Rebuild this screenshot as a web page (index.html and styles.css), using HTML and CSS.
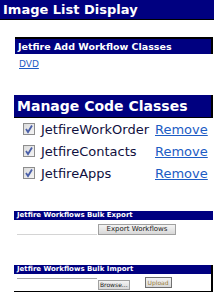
FILE: index.html
```html
<!DOCTYPE html>
<html lang="en">
<head>
<meta charset="utf-8" />
<title>Image List Display</title>
<link rel="stylesheet" href="styles.css">
</head>
<body>

<div class="title">Image List Display</div>

<div class="panel add">
	<div class="head">Jetfire Add Workflow Classes</div>
	<a class="dvd" href="#">DVD</a>
</div>

<div class="panel manage">
	<div class="head">Manage Code Classes</div>
	<div class="row">
		<span class="check"><svg viewBox="0 0 10 10"><path d="M2 5 L4 8 L8 1.5" /></svg></span>
		<span class="name">JetfireWorkOrder</span>
		<a href="#">Remove</a>
	</div>
	<div class="row">
		<span class="check"><svg viewBox="0 0 10 10"><path d="M2 5 L4 8 L8 1.5" /></svg></span>
		<span class="name">JetfireContacts</span>
		<a href="#">Remove</a>
	</div>
	<div class="row">
		<span class="check"><svg viewBox="0 0 10 10"><path d="M2 5 L4 8 L8 1.5" /></svg></span>
		<span class="name">JetfireApps</span>
		<a href="#">Remove</a>
	</div>
</div>

<div class="panel export">
	<div class="head">Jetfire Workflows Bulk Export</div>
	<div class="line">
		<span class="field"></span>
		<span class="btn wide">Export Workflows</span>
	</div>
</div>

<div class="panel import">
	<div class="head">Jetfire Workflows Bulk Import</div>
	<div class="line">
		<span class="field"></span>
		<span class="btn browse">Browse...</span>
		<span class="btn up">Upload</span>
	</div>
</div>

</body>
</html>
```

FILE: styles.css
```css
body {
	margin: 0;
	font-family: "DejaVu Sans", Verdana, sans-serif;
	background: #fff;
}

.title {
	height: 19px;
	background: #000080;
	border-bottom: 1px solid #000;
	color: #fff;
	font: bold 13px/19px "DejaVu Sans", sans-serif;
	padding-left: 3px;
}

/* --------------------------------- */

.panel {
	margin-left: 14px;
	margin-right: 1px;
}
.head {
	background: #000080;
	color: #fff;
	font-weight: bold;
	padding-left: 3px;
}

.add {
	margin-top: 17px;
}
.add .head {
	border-top: 2px solid #000;
	border-right: 2px solid #000;
	font-size: 9.5px;
	line-height: 15px;
	margin-left: 1px;
}
.dvd {
	display: block;
	margin: 5px 0 0 5px;
	font-size: 9px;
	color: #1c5cc4;
}

/* --------------------------------- */

.manage {
	margin-top: 26px;
}
.manage .head {
	font-size: 14px;
	line-height: 22px;
	border-right: 2px solid #000;
	border-bottom: 1px solid #000;
}
.row {
	display: flex;
	align-items: center;
	height: 22px;
	padding-left: 9px;
	font-size: 13px;
}
.row:first-of-type {
	margin-top: 5px;
}
.check {
	display: inline-flex;
	width: 10px;
	height: 10px;
	border: 1px solid #8d8d8d;
	background: linear-gradient(135deg, #dcdcdc, #f4f4f4);
	margin-right: 6px;
}
.check svg {
	width: 10px;
	height: 10px;
	fill: none;
	stroke: #4a5fa8;
	stroke-width: 1.8;
}
.name {
	color: #101040;
	width: 114px;
}
.row a {
	color: #1c5cc4;
}

/* --------------------------------- */

.export {
	margin-top: 27px;
}
.export .head, .import .head {
	font-size: 7px;
	line-height: 9px;
}
.line {
	display: flex;
	align-items: flex-end;
	padding: 4px 0 0 3px;
}
.field {
	width: 80px;
	height: 10px;
	border-bottom: 1px solid #d4d4d4;
}
.btn {
	font-size: 7px;
	line-height: 9px;
	color: #222;
	background: linear-gradient(#f4f4f4, #d8d8d8);
	border: 1px solid #a0a0a0;
	padding: 0 4px;
	margin-left: 1px;
}
.btn.wide {
	width: 68px;
	text-align: center;
}

.import {
	margin-top: 30px;
	border-right: 2px solid #000;
	border-bottom: 1px solid #000;
}
.import .line {
	align-items: flex-start;
	height: 17px;
	padding-top: 0;
}
.import .field {
	margin-top: 4px;
	height: 0;
	border-bottom: none;
	border-top: 1px solid #a8a8a8;
}
.btn.browse {
	margin-top: 6px;
	font-size: 6px;
	line-height: 8px;
	padding: 0 1px;
}
.btn.up {
	margin: 3px 0 0 15px;
	font-size: 6px;
	padding: 0 2px;
	color: #9a7e3a;
	border-color: #707070;
}
```
